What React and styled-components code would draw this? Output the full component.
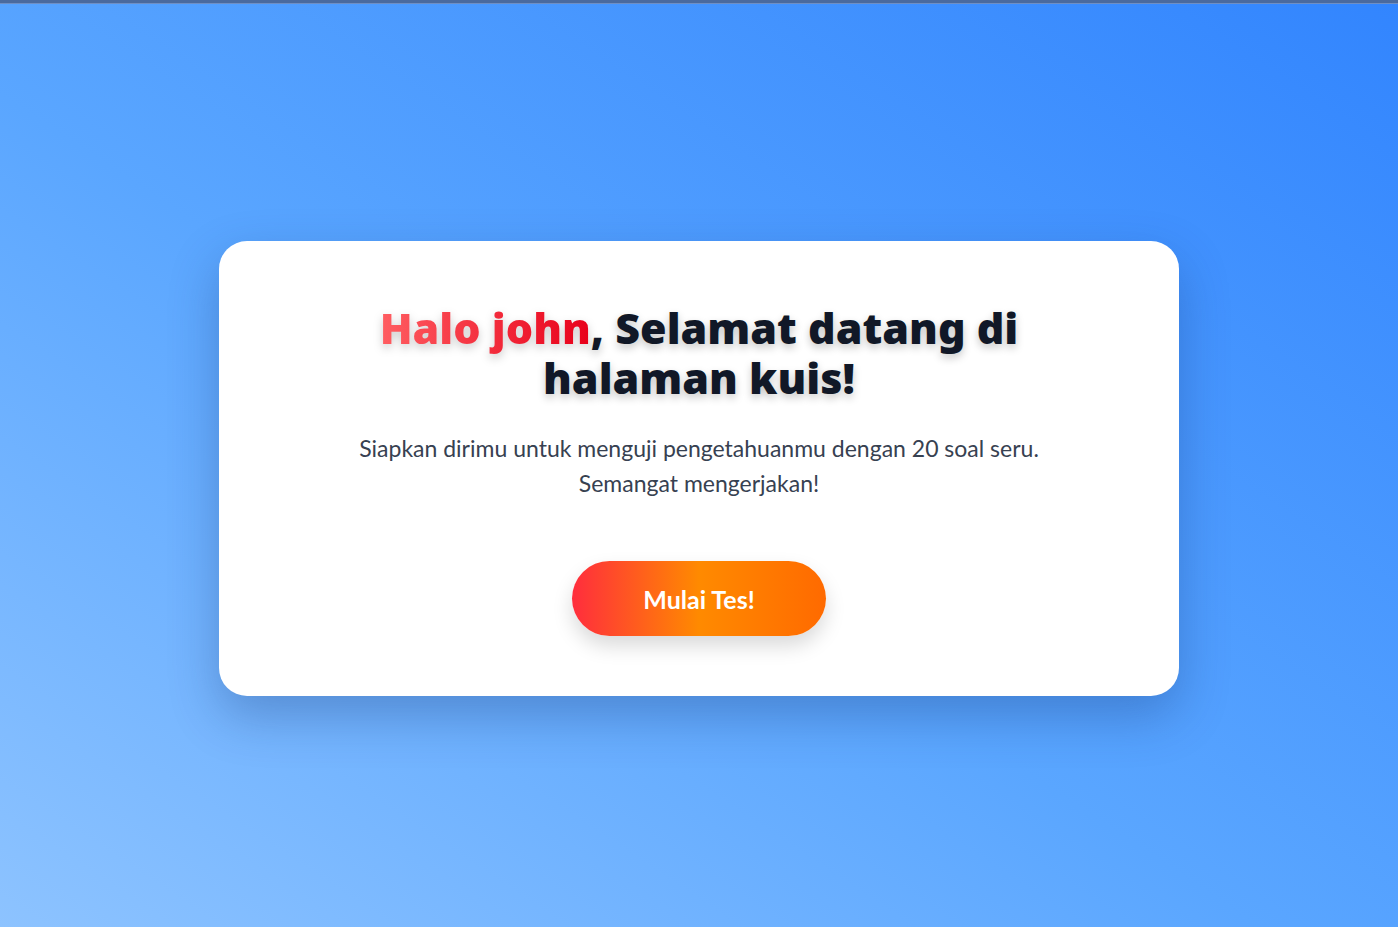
import React from 'react';
import styled, { createGlobalStyle } from 'styled-components';

const GlobalStyle = createGlobalStyle`
  * { box-sizing: border-box; }
  html, body {
    margin: 0;
    padding: 0;
  }
  body {
    font-family: Lato, "Open Sans", "Liberation Sans", sans-serif;
  }
`;

const Page = styled.div`
  min-height: 100vh;
  display: flex;
  flex-direction: column;
  background: linear-gradient(to top right, #8dc3ff 0%, #5aa6ff 45%, #3285fe 100%);
  border-top: 3px solid #4a6a9e;
`;

const Center = styled.main`
  flex: 1;
  display: flex;
  align-items: center;
  justify-content: center;
  padding-top: 6px;
  border-top: 1px solid #6f8fc4;
`;

const Card = styled.section`
  width: 960px;
  background: #ffffff;
  border-radius: 28px;
  padding: 62px 40px 60px;
  box-shadow: 0 20px 50px rgba(20, 50, 110, 0.3);
  display: flex;
  flex-direction: column;
  align-items: center;
  text-align: center;
`;

const Title = styled.h1`
  margin: 0;
  max-width: 700px;
  font-family: "Noto Sans", Inter, sans-serif;
  font-size: 43px;
  font-weight: 900;
  line-height: 50px;
  color: #111827;
  text-shadow: 0 4px 8px rgba(0, 0, 0, 0.22);
`;

const Name = styled.span`
  background: linear-gradient(to right, #ff5e62, #e8001a);
  -webkit-background-clip: text;
  background-clip: text;
  color: transparent;
  text-shadow: none;
  filter: drop-shadow(0 4px 5px rgba(0, 0, 0, 0.2));
`;

const Lead = styled.p`
  margin: 28px 0 0;
  max-width: 740px;
  font-size: 23px;
  line-height: 35px;
  color: #374151;
`;

const StartButton = styled.button`
  margin-top: 60px;
  width: 254px;
  height: 75px;
  border: none;
  border-radius: 999px;
  background: linear-gradient(to right, #ff2d3d 0%, #ff8a00 50%, #ff6a00 100%);
  color: #ffffff;
  font-family: Lato, "Open Sans", sans-serif;
  font-size: 25px;
  font-weight: 700;
  cursor: pointer;
  box-shadow: 0 10px 20px rgba(0, 0, 0, 0.15);
`;

const App = () => (
  <>
    <GlobalStyle />
    <Page>
      <Center>
        <Card>
          <Title>
            <Name>Halo john</Name>, Selamat datang di halaman kuis!
          </Title>
          <Lead>
            Siapkan dirimu untuk menguji pengetahuanmu dengan 20 soal seru.
            <br />
            Semangat mengerjakan!
          </Lead>
          <StartButton>Mulai Tes!</StartButton>
        </Card>
      </Center>
    </Page>
  </>
);

export default App;
